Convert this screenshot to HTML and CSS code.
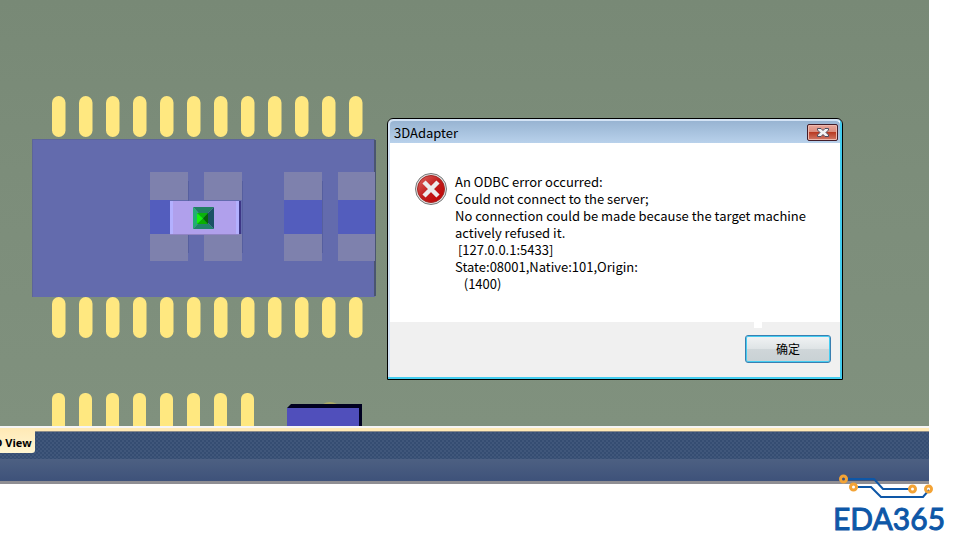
FILE: index.html
```html
<!DOCTYPE html>
<html lang="en">
  <head>
    <meta charset="UTF-8">
    <meta name="viewport" content="width=device-width, initial-scale=1.0">
    <title>3D View</title>
    <link rel="stylesheet" href="styles.css">
  </head>
  <body>
    <div class="app">
      <main class="viewport">
        <svg class="board" aria-hidden="true">
          <defs>
            <pattern id="pins" x="52" y="0" width="27" height="426" patternUnits="userSpaceOnUse">
              <rect x="0" y="96" width="13.500" height="41" rx="6.750" fill="#ffe880"/>
              <rect x="0" y="297" width="13.500" height="41" rx="6.750" fill="#ffe880"/>
            </pattern>
            <pattern id="pins-short" x="52" y="0" width="27" height="600" patternUnits="userSpaceOnUse">
              <rect x="0" y="393" width="13" height="41" rx="6" fill="#ffe880"/>
            </pattern>
          </defs>
          <rect x="52" y="96" width="324" height="41" fill="url(#pins)"/>
          <rect x="52" y="297" width="324" height="41" fill="url(#pins)"/>
          <rect x="52" y="393" width="216" height="41" fill="url(#pins-short)"/>

          <!-- chip body -->
          <rect x="32" y="139" width="343" height="158" fill="#636bad"/>
          <path d="M32 139.500H375M32.500 139V297" stroke="#5d6599" fill="none"/>
          <path d="M375 140V296" stroke="#4a5570" stroke-width="2"/>
          <g fill="#7e81ad">
            <path d="M150 172h38v28h-38zM204 172h38v28h-38zM284 172h38v28h-38zM338 172h37v28h-37z"/>
            <path d="M150 234h38v27h-38zM204 234h38v27h-38zM284 234h38v27h-38zM338 234h37v27h-37z"/>
          </g>
          <path d="M150 200h20v34h-20zM284 200h38v34h-38zM338 200h37v34h-37z" fill="#535dbd"/>
          <path d="M188.500 181v72M242.500 181v72M322.500 181v72" stroke="#565f9f"/>

          <!-- small component with the marker -->
          <rect x="239" y="201" width="2" height="33" fill="#3d3686"/>
          <rect x="170" y="201" width="69" height="34" fill="#b0a0ec"/>
          <path d="M170 201h3v34h-3zM236 201h3v34h-3z" fill="#b3b0ff"/>
          <path d="M170 234.500h69" stroke="#9184c4"/>
          <path d="M193 207h21l-11 11z" fill="#218062"/>
          <path d="M193 207v22l10-11z" fill="#22ae72"/>
          <path d="M193 229h21l-11-11z" fill="#20856a"/>
          <path d="M214 207v22l-11-11z" fill="#1b5165"/>
          <path d="M197 213v11l6-5.500z" fill="#14f50a"/>
          <path d="M197 213h11l-5 5.500z" fill="#09b40a"/>
          <path d="M197 224h11l-5-5.500z" fill="#09b000"/>
          <path d="M208 213v11l-5-5.500z" fill="#056408"/>

          <path d="M323 404q7-4 14 0z" fill="#aaa965"/>
          <path d="M287 408l4-4h71v40h-75z" fill="#000020"/>
          <path d="M287 408h72v30h-72z" fill="#504fbb"/>
        </svg>

        <section class="dialog" role="alertdialog" aria-labelledby="dialog-title" aria-describedby="dialog-text">
          <header class="dialog-header">
            <h1 class="dialog-title" id="dialog-title">3DAdapter</h1>
            <button class="close-button" type="button" aria-label="Close">
              <svg width="12" height="9" viewBox="0 0 12 9">
                <path d="M0.500 0.500h3.500l2 2 2-2h3.500v1.500l-2.500 2.500 2.500 2.500v1.500h-3.500l-2-2-2 2h-3.500v-1.500l2.500-2.500-2.500-2.500z" fill="#f4f4f4" stroke="#4b4d60"/>
              </svg>
            </button>
          </header>
          <div class="dialog-body">
            <svg class="error-icon" width="32" height="32" viewBox="0 0 32 32" aria-hidden="true">
              <defs>
                <linearGradient id="red" x1="0" y1="0" x2="1" y2="1">
                  <stop offset="0" stop-color="#e06863"/>
                  <stop offset=".5" stop-color="#bf1d1c"/>
                  <stop offset="1" stop-color="#c30000"/>
                </linearGradient>
              </defs>
              <circle cx="16" cy="16" r="15.500" fill="#e0e0e0" stroke="#777"/>
              <circle cx="16" cy="16" r="13.500" fill="url(#red)" stroke="#a52825"/>
              <path d="M9 9l14 14M23 9l-14 14" stroke="#ececec" stroke-width="4.500"/>
            </svg>
            <p class="dialog-text" id="dialog-text">An ODBC error occurred:
Could not connect to the server;
No connection could be made because the target machine
actively refused it.
 [127.0.0.1:5433]
State:08001,Native:101,Origin:
   (1400)</p>
          </div>
          <footer class="dialog-footer">
            <button class="ok-button" type="button" lang="zh-CN">确定</button>
          </footer>
        </section>
      </main>

      <nav class="tab-bar">
        <button class="tab" type="button">3D View</button>
      </nav>
      <div class="status-bar"></div>
    </div>

    <div class="logo">
      <svg width="98" height="26" viewBox="0 0 98 26" fill="none" aria-hidden="true">
        <path d="M10 5h26l9 10h26M20 13h13l10 10h42l6-7" stroke="#0e57a7" stroke-width="2"/>
        <g stroke="#f3a335" stroke-width="3">
          <circle cx="5.500" cy="5" r="3"/>
          <circle cx="15.500" cy="13" r="3"/>
          <circle cx="74.500" cy="15" r="3"/>
          <circle cx="90.500" cy="15" r="3"/>
        </g>
      </svg>
      <span class="logo-text">EDA365</span>
    </div>
  </body>
</html>
```
FILE: styles.css
```css
:root {
  --board-color: #7c8d7a;
  --bar-color: #40577b;
  --bar-dot: #354d72;
  --cream: #ffe9b5;
  --logo-blue: #0e57a7;
}

* {
  box-sizing: border-box;
}

body {
  margin: 0;
  min-height: 100vh;
  position: relative;
  background: #fff;
  color: #000;
  font-family: 'Noto Sans CJK SC', sans-serif;
  font-size: 13px;
}

.app {
  display: flex;
  flex-direction: column;
  min-height: 100vh;
  padding: 0 31px 56px 0;
}

.viewport {
  position: relative;
  flex: 1;
  min-height: 400px;
  overflow: hidden;
  background: linear-gradient(#788976, var(--board-color) 40%, #80917e);
}

.board {
  position: absolute;
  width: 100%;
  height: 100%;
}

/* Error window */
.dialog {
  position: absolute;
  top: 118px;
  left: 387px;
  width: 456px;
  border: 1px solid #000;
  border-radius: 6px 6px 0 0;
  background: #fff;
  box-shadow: inset -2px -2px 0 #43cdef, inset 2px 2px 0 #d4e3f5;
  padding: 2px;
}

.dialog-header {
  display: flex;
  align-items: center;
  justify-content: space-between;
  height: 22px;
  padding: 0 2px 0 4px;
  border-radius: 4px 4px 0 0;
  background: linear-gradient(#98b4d2, #b8d1eb);
}

.dialog-title {
  margin: 0;
  font-size: 13px;
  font-weight: 400;
  line-height: 17px;
}

.close-button {
  display: flex;
  align-items: center;
  justify-content: center;
  width: 31px;
  height: 17px;
  padding: 0;
  border: 1px solid #431d29;
  border-radius: 2px;
  background: linear-gradient(#e8a79b, #d98a7b 48%, #b93b23 50%, #d27a68);
  box-shadow: inset 0 0 0 1px #efb9ae;
}

.dialog-body {
  display: flex;
  gap: 8px;
  padding: 30px 25px;
}

.dialog-text {
  margin: 0;
  line-height: 17px;
  white-space: pre-wrap;
}

.dialog-footer {
  position: relative;
  display: flex;
  justify-content: flex-end;
  padding: 13px 9px 14px;
  background: #f0f0f0;
}

.dialog-footer::before {
  content: '';
  position: absolute;
  top: 0;
  right: 78px;
  width: 8px;
  height: 6px;
  background: #fff;
}

.ok-button {
  width: 86px;
  height: 28px;
  padding: 0 0 2px;
  border: 1px solid #3a7fb0;
  border-radius: 3px;
  background: linear-gradient(#f1f3f4, #dfe4e6 48%, #cfd6d9 50%, #c9d1d4);
  box-shadow: inset 0 0 0 1px #45cdf2;
  font: 12px 'Noto Sans CJK SC', sans-serif;
}

/* Bottom bars */
.tab-bar {
  display: flex;
  height: 33px;
  border-top: 2px solid #f5f5f5;
  background:
    radial-gradient(circle at 1px 1px, var(--bar-dot) 1px, transparent 1px) 0 0 / 4px 4px,
    radial-gradient(circle at 1px 1px, var(--bar-dot) 1px, transparent 1px) 2px 2px / 4px 4px,
    var(--bar-color);
  box-shadow: inset 0 3px 0 var(--cream), inset 0 4px 0 #8b8b89;
}

.tab {
  height: 25px;
  margin-left: -15px;
  padding: 3px 3px 0;
  border: 0;
  border-radius: 0 0 3px 0;
  background: linear-gradient(var(--cream), #fff6d2);
  font: bold 11px 'Open Sans', sans-serif;
}

.status-bar {
  height: 25px;
  border-bottom: 3px solid #8f8e93;
  background: linear-gradient(#4d6082, #3e527a);
}

.logo {
  position: absolute;
  right: 16px;
  bottom: 4px;
  display: flex;
  flex-direction: column;
  width: 111px;
}

.logo svg {
  margin-left: 5px;
}

.logo-text {
  color: var(--logo-blue);
  font-family: Lato, sans-serif;
  font-size: 30px;
  line-height: 36px;
  -webkit-text-stroke: 1px var(--logo-blue);
}
```
